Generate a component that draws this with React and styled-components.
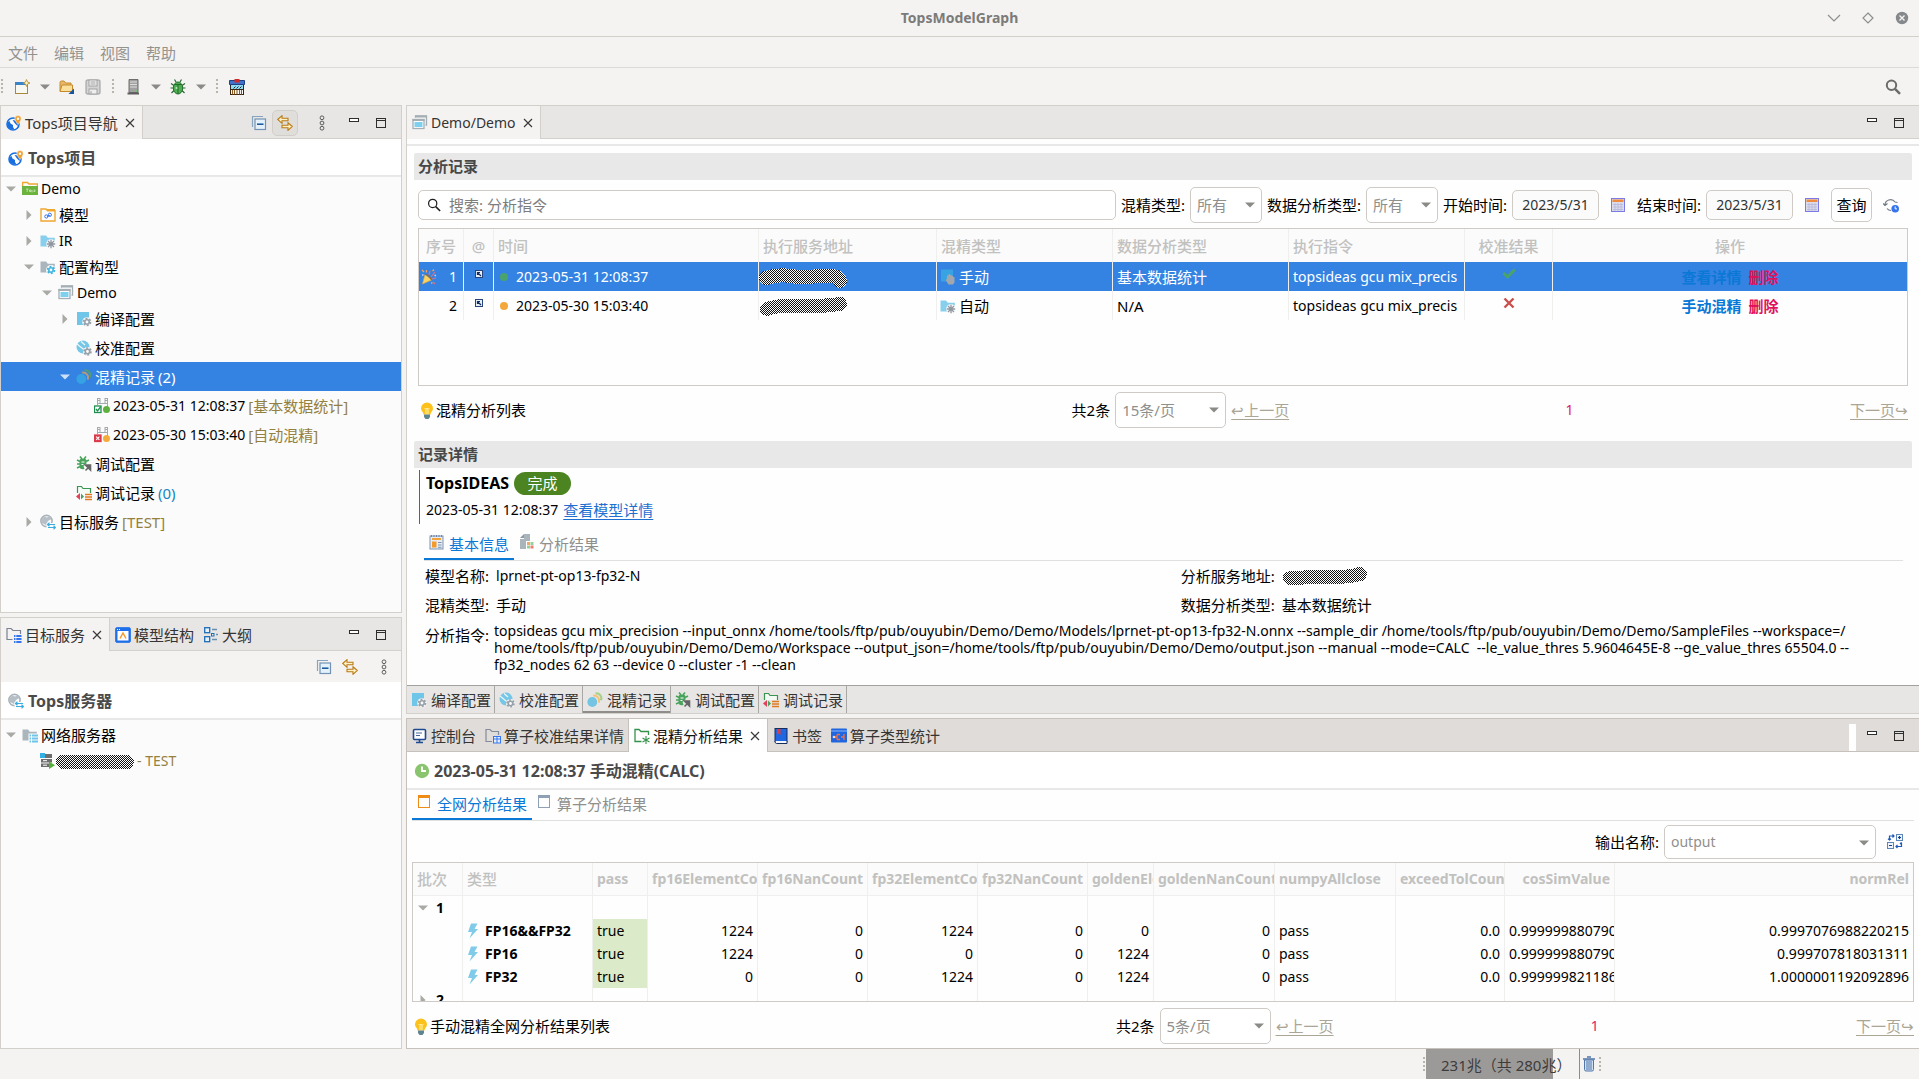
import React, { useState } from "react";
import styled, { createGlobalStyle, css } from "styled-components";

const Svg = ({ w = 16, h = 16, box, children, ...rest }) => (
  <svg
    width={w}
    height={h}
    viewBox={box || `0 0 ${w} ${h}`}
    fill="none"
    aria-hidden="true"
    {...rest}
  >
    {children}
  </svg>
);

const Gear = ({ x = 11, y = 11, color = "#9aa7b0", hole = "#fbfbfb" }) => (
  <g>
    <circle cx={x} cy={y} r="3.4" stroke={color} strokeWidth="1.8" strokeDasharray="1.8 1.76" />
    <circle cx={x} cy={y} r="2.2" fill={hole} stroke={color} strokeWidth="1.6" />
  </g>
);

const FolderShape = ({ color = "#9aa7b0" }) => (
  <path d="M0.5 2.5h5.5l1.8 2.2h7v8.8h-14.3z" fill={color} />
);

const GlobePinIcon = () => (
  <Svg>
    <circle cx="7" cy="9" r="6" fill="#fff" stroke="#1a6fe0" strokeWidth="1.6" />
    <path d="M1.5 7.5L3.5 6l1 2.5 2.5 1.5v2l1.5 2.500Q3 15 1.500 10.500z" fill="#1a6fe0" />
    <path d="M6.500 5L9 8.500l2.500 2.500 1-2.500-3-3z" fill="#1a6fe0" />
    <path d="M12 0.500a3.200 3.200 0 0 1 3.200 3.200c0 2-3.200 5.800-3.200 5.800S8.800 5.700 8.800 3.700A3.200 3.200 0 0 1 12 0.500z" fill="#f0a030" stroke="#fff" strokeWidth="0.5" />
    <circle cx="12" cy="3.700" r="1.200" fill="#fff" />
  </Svg>
);

const ProjectIcon = () => (
  <Svg>
    <path d="M0.500 5V1.500h5l1.500 1.500h8.500V5" stroke="#f0a732" strokeWidth="1.500" />
    <rect y="5" width="16" height="9" fill="#6cb33e" />
    <path d="M4 8h2.500M5.200 8v3M7.500 9h1.500v1.500H7.500zM10 9v2.500M11.500 9h1.500v1.500h-1.500" stroke="#d8efc6" strokeWidth="0.700" />
  </Svg>
);

const ModelFolderIcon = () => (
  <Svg>
    <path d="M1 2h5l1.500 1.800H15V14H1z" fill="#fff" stroke="#f0a732" strokeWidth="1.400" />
    <path d="M6 2h9v1.800H7.500z" fill="#f0a732" />
    <circle cx="6.300" cy="9.500" r="1.600" stroke="#3574f0" />
    <circle cx="9.800" cy="7.800" r="1.600" stroke="#3574f0" />
    <path d="M7 9.500l3-1" stroke="#3574f0" />
  </Svg>
);

const IrFolderIcon = () => (
  <Svg>
    <FolderShape color="#87cfec" />
    <circle cx="11" cy="11" r="4.800" fill="#fbfbfb" />
    <path d="M11 6.800v8.400M6.800 11h8.400M8 8l6 6M14 8l-6 6" stroke="#9097a0" strokeWidth="1.300" />
  </Svg>
);

const ConfigFolderIcon = () => (
  <Svg>
    <FolderShape color="#aab5bc" />
    <circle cx="11" cy="11" r="5" fill="#fbfbfb" />
    <Gear color="#40b6e0" />
  </Svg>
);

const WindowsIcon = () => (
  <Svg>
    <path d="M3.500 2.500V1h11v9h-1" stroke="#a4aeb5" strokeWidth="1.300" />
    <path d="M3 0.500h12v2H3z" fill="#a4aeb5" />
    <rect x="1" y="4.500" width="11" height="9" fill="#fff" stroke="#a4aeb5" strokeWidth="1.300" />
    <path d="M0.500 4h12v2h-12z" fill="#a4aeb5" />
    <rect x="2.500" y="7" width="8" height="5" fill="#7fd0ee" />
  </Svg>
);

const CompileIcon = () => (
  <Svg>
    <path d="M1 1h12v13H1z" fill="#6fc6e8" />
    <circle cx="11" cy="11" r="4.800" fill="#f4f4f4" />
    <Gear color="#97a1aa" />
  </Svg>
);

const CalibrateIcon = () => (
  <Svg>
    <circle cx="7" cy="7" r="6.500" fill="#74c7e6" />
    <path d="M1 4l11 9M5 1.500l4 3.500" stroke="#f4f4f4" strokeWidth="1.200" />
    <circle cx="11.500" cy="11.500" r="4.500" fill="#f4f4f4" />
    <Gear x={11.5} y={11.5} color="#97a1aa" />
  </Svg>
);

const MixIcon = ({ onBlue }) => (
  <Svg>
    <path d="M8.500 1.500a4.800 4.800 0 0 1 5.300 6.800" stroke={onBlue ? "#4f9b7c" : "#a8d28b"} strokeWidth="2.200" />
    <path d="M6 3.600a5 5 0 0 1 5.600 7" stroke={onBlue ? "#b09a7c" : "#f6c276"} strokeWidth="1.900" />
    <circle cx="5.300" cy="10" r="4.900" fill={onBlue ? "#35a2e4" : "#74c4e4"} />
  </Svg>
);

const RecordIcon = ({ ok }) => (
  <Svg>
    <path d="M3.500 0v7M13.500 0v9M3.500 5.500h10M6 0v6M11 0v6M3.500 2.500H6M11 2.500h2.500M3.500 0.500H6M11 0.500h2.500" stroke="#a4a9ad" />
    <rect x="0.500" y="8" width="6.500" height="6.500" fill={ok ? "#fff" : "#db3b4b"} stroke={ok ? "#1e8e4e" : "#db3b4b"} strokeWidth="1.300" />
    {ok ? (
      <path d="M2 11l1.500 2 3-4" stroke="#1e8e4e" strokeWidth="1.300" />
    ) : (
      <path d="M2.200 9.700l3.200 3.200M5.400 9.700l-3.200 3.200" stroke="#fff" strokeWidth="1.100" />
    )}
    <circle cx="12.500" cy="11.500" r="3.500" fill={ok ? "#5fb13f" : "#f4ab3a"} />
  </Svg>
);

const DebugIcon = () => (
  <Svg>
    <path d="M4 0.500l2 2.500M10 0.500L8 3M1 4l3 1.500M1 8h3M1 12l3-1.500M13 4l-3 1.500" stroke="#4aa35c" strokeWidth="1.600" />
    <path d="M3.500 4.500Q3.500 2.500 7 2.500t3.500 2v3L7.500 10l1 3Q3.500 14 3.500 10z" fill="#4aa35c" />
    <path d="M5.500 6h3M5.500 8.500h2" stroke="#fff" />
    <path d="M9.500 14.500l4-4M14.500 14V9H9.500z" stroke="#666" strokeWidth="1.600" fill="#666" />
  </Svg>
);

const DebugRecordIcon = () => (
  <Svg>
    <path d="M1.500 8V1.500h4L7 3.500h7.500V8" fill="#f4fbf4" stroke="#3a9550" strokeWidth="1.200" />
    <path d="M0 11.500L4 8v7z" fill="#e3405a" />
    <path d="M8 11.500L5 8.500v6z" fill="#4aa35c" />
    <path d="M9 9.500h7M9 12h7M9 14.500h7" stroke="#e07a20" strokeWidth="1.300" />
  </Svg>
);

const TargetIcon = () => (
  <Svg>
    <circle cx="6.500" cy="7" r="5.600" stroke="#a9b3ba" strokeWidth="1.600" />
    <path d="M1 6l3-3.500 3 1 3-1.500 1.500 3L8 7l-2 4-4-2z" fill="#b6bfc5" />
    <path d="M6.500 9h9.500v7H6.500z" fill="#fbfbfb" />
    <path d="M7.500 10.500h7.500M9.500 8.700l-2 1.800 2 1.800M15.500 13.500H8M13.500 11.800l2 1.700-2 1.800" stroke="#3aaede" strokeWidth="1.200" />
  </Svg>
);

const NetFolderIcon = () => (
  <Svg>
    <FolderShape color="#aab5bc" />
    <path d="M6.500 6.500H16V16H6.500z" fill="#fbfbfb" />
    <path d="M7.500 8.500h1.500M10 8.500h6M7.500 11.500h1.500M10 11.500h6M7.500 14.500h1.500M10 14.500h6" stroke="#6cc6ea" strokeWidth="2" />
  </Svg>
);

const ServerRunIcon = () => (
  <Svg>
    <rect x="1" y="1" width="11" height="4" fill="#6e6e6e" />
    <rect x="0" y="0" width="5" height="5" fill="#35b0e4" />
    <rect x="1" y="6" width="11" height="3.500" fill="#6e6e6e" />
    <rect x="1" y="10.500" width="9" height="3.500" fill="#6e6e6e" />
    <path d="M3 7.700h4M3 12.200h4" stroke="#fff" />
    <path d="M9 8.500l6 3.700-6 3.800z" fill="#55b03c" />
  </Svg>
);

const FolderServerIcon = () => (
  <Svg>
    <path d="M6.500 12.500H1v-11h4l2 2h7.500V7" stroke="#7a8291" strokeWidth="1.200" />
    <path d="M8 9h7.500M8 12h7.500M8 15h7.500" stroke="#3574f0" strokeWidth="2" />
    <path d="M9 9h1.500M9 12h1.500M9 15h1.500" stroke="#fff" />
  </Svg>
);

const StructureIcon = () => (
  <Svg>
    <rect x="0.700" y="0.700" width="14.600" height="14.600" rx="1" fill="#1f6fea" stroke="#1f6fea" />
    <rect x="2.500" y="4" width="11" height="9.500" fill="#fff" />
    <path d="M5 11.500L8 6l3 5.500" stroke="#f29b2c" strokeWidth="1.500" />
    <path d="M2 2.500h1M4 2.500h1" stroke="#fff" />
  </Svg>
);

const OutlineIcon = () => (
  <Svg>
    <rect x="1.700" y="0.700" width="5" height="5" fill="#e8f2fb" stroke="#1f6db4" strokeWidth="1.300" />
    <rect x="1.700" y="9.700" width="5" height="5" fill="#e8f2fb" stroke="#1f6db4" strokeWidth="1.300" />
    <path d="M9 2.500h5M13 7.500h2M9 12.500h5" stroke="#6a8fae" strokeWidth="1.400" />
    <rect x="8.500" y="6.500" width="2.500" height="2.500" stroke="#1f6db4" />
  </Svg>
);

const CollapseIcon = () => (
  <Svg>
    <path d="M1.500 12V1.500H12" stroke="#87a5c0" strokeWidth="1.200" />
    <rect x="4" y="4" width="10.500" height="10.500" fill="#e4f1fb" stroke="#7293b4" strokeWidth="1.200" />
    <path d="M6 9.200h6.500" stroke="#11539b" strokeWidth="1.500" />
  </Svg>
);

const LinkIcon = () => (
  <Svg>
    <path d="M0.700 4.500L5 0.700v2.500h6v2.600H5v2.500z" fill="#fdf0c4" stroke="#b97a14" strokeWidth="1.100" />
    <path d="M15.300 11.500L11 7.800v2.400H5v2.600h6v2.500z" fill="#fdf0c4" stroke="#b97a14" strokeWidth="1.100" />
  </Svg>
);

const KebabIcon = () => (
  <Svg>
    <circle cx="8" cy="2.800" r="1.900" stroke="#5d5d5d" />
    <circle cx="8" cy="8" r="1.900" stroke="#5d5d5d" />
    <circle cx="8" cy="13.200" r="1.900" stroke="#5d5d5d" />
  </Svg>
);

const MinIcon = () => (
  <Svg>
    <rect x="3.500" y="3.500" width="9" height="3" fill="#fff" stroke="#2d2d2d" />
  </Svg>
);

const MaxIcon = () => (
  <Svg>
    <rect x="3.500" y="3.500" width="9" height="9" stroke="#2d2d2d" />
    <path d="M3 5.500h10" stroke="#2d2d2d" />
  </Svg>
);

const CloseIcon = () => (
  <Svg w={10} h={10}>
    <path d="M1 1l8 8M9 1L1 9" stroke="#3a3a3a" strokeWidth="1.200" />
  </Svg>
);

const CaretIcon = ({ color = "#8a8a86" }) => (
  <Svg w={10} h={6}>
    <path d="M0 0.500h10L5 5.500z" fill={color} />
  </Svg>
);

const RightIcon = () => (
  <Svg w={6} h={10}>
    <path d="M0.500 0v10L5.500 5z" fill="#a9a9a6" />
  </Svg>
);

const NewIcon = () => (
  <Svg>
    <rect x="1.500" y="3.500" width="12" height="11" fill="#f7f8ef" stroke="#a8893c" />
    <rect x="1" y="3" width="11" height="3" fill="#3d84c6" />
    <path d="M12.500 0.500l1 2.500 2.500 1-2.500 1-1 2.500-1-2.500-2.500-1 2.500-1z" fill="#fff6c2" stroke="#b5892e" strokeWidth="0.800" />
  </Svg>
);

const OpenIcon = () => (
  <Svg>
    <path d="M1 12V3.500q0-1.500 1.500-1.500H5l1.500 2H12v8z" fill="#e8b768" stroke="#c68a2c" />
    <path d="M1 12.500L3 6h10.500v6.500z" fill="#fbdf9c" stroke="#c68a2c" />
    <path d="M15 9.500V15H9.500z" fill="#16569f" />
  </Svg>
);

const SaveIcon = () => (
  <Svg>
    <rect x="1" y="1" width="14" height="14" rx="1" fill="#d4d4d4" stroke="#9a9a9a" />
    <rect x="4" y="1" width="8" height="6" fill="#f2f2f2" stroke="#a2a2a2" />
    <rect x="4" y="10" width="8" height="5" fill="#efefef" stroke="#a2a2a2" />
    <path d="M6 12v3M5.500 3h5M5.500 5h5" stroke="#a2a2a2" />
  </Svg>
);

const TowerIcon = () => (
  <Svg>
    <path d="M4 0.500h9v13H4z" fill="#a0a0a0" stroke="#6e6e6e" />
    <path d="M5 3h7M5 5.500h7M5 8h7" stroke="#dcdcdc" />
    <path d="M2.500 13.500h11.500v2H2.500z" fill="#5c5c5c" />
    <path d="M11 12h1" stroke="#4be04b" />
  </Svg>
);

const BugIcon = () => (
  <Svg>
    <path d="M4.500 0.500L6 3M11.500 0.500L10 3M1 4.500l3 2M15 4.500l-3 2M0.500 9h3M15.500 9h-3M1.500 14L4 11.500M14.500 14L12 11.500" stroke="#2b6a33" strokeWidth="1.200" />
    <ellipse cx="8" cy="9" rx="4.700" ry="6" fill="#4fae53" stroke="#226b2b" />
    <path d="M4.500 5.500h7M8 6v9" stroke="#226b2b" />
    <circle cx="6.500" cy="9" r="1" fill="#b9ecb5" />
  </Svg>
);

const StoreIcon = () => (
  <Svg>
    <rect x="1.500" y="5.500" width="13" height="5" fill="#8fdcf7" stroke="#2a2a2a" />
    <path d="M0.500 1.500h15v4h-15z" fill="#3e73c9" stroke="#1f3f86" />
    <rect x="5.500" y="0" width="5" height="3.500" fill="#d22a2a" />
    <path d="M4.500 9.500l2-2M7.500 9.500l2-2M10.500 9.500l2-2" stroke="#2a2a2a" />
    <rect x="1.500" y="10.500" width="13" height="5" fill="#fff" stroke="#3a2512" />
    <path d="M3.500 11v4.500M5.500 11v4.500M8 11v4.500M10.500 11v4.500M12.500 11v4.500" stroke="#8a5a20" strokeWidth="1.100" />
  </Svg>
);

const SearchIcon = ({ size = 16, color = "#1f1f1f", weight = 1.4 }) => (
  <Svg w={size} h={size} box="0 0 16 16">
    <circle cx="6.500" cy="6.200" r="4.700" stroke={color} strokeWidth={weight} />
    <path d="M10 9.800l5 5" stroke={color} strokeWidth={weight + 0.4} />
  </Svg>
);

const CalendarIcon = () => (
  <Svg>
    <rect x="1.500" y="1.500" width="13" height="13" fill="#dcdcec" stroke="#7b7be8" />
    <rect x="2.500" y="2.500" width="11" height="2.500" fill="#f08a3c" />
    <path d="M3 7.500h10M3 10h10M3 12.500h10M5 6v8M8 6v8M11 6v8" stroke="#b6b6d8" strokeWidth="0.800" />
  </Svg>
);

const RefreshIcon = () => (
  <Svg>
    <path d="M2 8.500a5.500 5.500 0 0 1 10-3.500M2 8.500L0 6.500M2 8.500l2.500-2M4 11.500a5 5 0 0 0 4 2M12 5l2.500 0.500" stroke="#747b88" strokeWidth="1.200" />
    <circle cx="12.200" cy="11.700" r="3.800" fill="#3574f0" />
    <path d="M12.200 9.500v2.400h1.800" stroke="#fff" />
  </Svg>
);

const BulbIcon = () => (
  <Svg w={14} h={17}>
    <path d="M7 0.500a6 6 0 0 1 6 6c0 2.500-2.500 3.500-2.500 6h-7C3.500 10 1 9 1 6.500a6 6 0 0 1 6-6z" fill="#fcc21b" />
    <path d="M4.500 6l1.500 1.500L7 6l1 1.500L9.500 6M6 7.500V12M8 7.500V12" stroke="#fff3b0" />
    <path d="M4 12.500h6v2.500l-1.500 2h-3L4 15z" fill="#5f8594" />
  </Svg>
);

const PartyIcon = () => (
  <Svg>
    <path d="M1.500 15L4 5.500 10.500 11z" fill="#f7d264" stroke="#e9a93c" strokeWidth="0.600" />
    <path d="M4 5.500Q8.500 6 10.500 11" stroke="#8c6a3a" strokeWidth="1.200" />
    <path d="M8 6l1-4M10 8l4-5M11 10l4-1M12 13l2 2" stroke="#d8708a" strokeWidth="1.200" />
    <path d="M1 1l2 2M5.500 1v2.500M13 0.500l-1.500 1.500M10 14h1.500" stroke="#f2a35e" strokeWidth="1.300" />
    <path d="M1 6h1.500M13.500 6.500H15" stroke="#c7d4ff" strokeWidth="1.300" />
  </Svg>
);

const LocateIcon = () => (
  <Svg w={8} h={8}>
    <rect x="0.500" y="0.500" width="7" height="7" fill="#e8eef8" stroke="#26457a" />
    <path d="M2.500 5V2.500H5M2.500 2.500l3.500 3.500" stroke="#152d5c" strokeWidth="1.200" />
  </Svg>
);

const HandIcon = () => (
  <Svg>
    <path d="M1 0.500h12v12H1z" fill="#38a3e3" />
    <path d="M7 9V6.500h1.500V5H10v1h1.500v0.700H13V8h1.500v5.500L13 15.500H8.500L6 11.500z" fill="#a2a7ad" />
  </Svg>
);

const InfoIcon = () => (
  <Svg>
    <rect x="1" y="2" width="13" height="13" fill="#e8edf4" stroke="#7d93b4" />
    <path d="M2.500 1v2M5 1v2M7.500 1v2M10 1v2M12.500 1v2" stroke="#6e86a8" />
    <path d="M3 5h9" stroke="#f29b2c" strokeWidth="1.800" />
    <rect x="3" y="7.500" width="4.500" height="6" fill="#f29b2c" />
    <path d="M9 8.500h3.500M9 11h3.500M9 13.300h3.500" stroke="#7d93b4" />
  </Svg>
);

const ResultIcon = () => (
  <Svg>
    <path d="M5 0h6v7H7v8H1V5h4z" fill="#aab4bb" />
    <path d="M1 4L5 0v4z" fill="#8d989f" />
    <rect x="8" y="8" width="3" height="3" fill="#f2a766" />
    <rect x="11.500" y="8" width="3" height="3" fill="#8fd39a" />
    <rect x="8" y="11.500" width="3" height="3" fill="#8fd39a" />
    <rect x="11.500" y="11.500" width="3" height="3" fill="#ee7d70" />
  </Svg>
);

const ConsoleIcon = () => (
  <Svg>
    <rect x="1.500" y="1.500" width="12" height="10" rx="1" fill="#fff" stroke="#1d4a91" strokeWidth="1.600" />
    <path d="M4 5h6M4 7.500h4" stroke="#46659a" />
    <path d="M4 14.500h7M7.500 12v2" stroke="#1d4a91" strokeWidth="1.600" />
  </Svg>
);

const FolderGridIcon = () => (
  <Svg>
    <path d="M7 13.500H1v-12h4l2 2h6.500V7" stroke="#848b9c" strokeWidth="1.200" />
    <rect x="8.500" y="8.500" width="7" height="6.500" fill="#e7effd" stroke="#3574f0" />
    <path d="M8.500 11h7M12 9v6" stroke="#3574f0" />
  </Svg>
);

const FolderMixIcon = () => (
  <Svg>
    <path d="M7.500 13.500H1v-12h4l2 2h7.500V7" stroke="#34924a" strokeWidth="1.300" />
    <path d="M12 8v8M8.500 10l7 4M15.500 10l-7 4" stroke="#34924a" strokeWidth="1.100" />
  </Svg>
);

const BookIcon = () => (
  <Svg>
    <rect x="2" y="0.500" width="12" height="13" fill="#1f66e0" stroke="#152c5c" />
    <path d="M2 13q0 2.500 1.500 2.500H14V13" fill="#f2f5fa" stroke="#152c5c" />
    <path d="M4 1h3.500v6L5.700 5.500 4 7z" fill="#e03a3a" />
  </Svg>
);

const StatIcon = () => (
  <Svg>
    <rect x="0" y="0.500" width="16" height="14" rx="1" fill="#1f66e0" />
    <path d="M0 3h16" stroke="#8db6fa" />
    <path d="M3 9h3M6 6.500v5M6 6.500h3M6 11.500h3M10 9h3M13 6v6" stroke="#f07048" strokeWidth="1.300" />
    <circle cx="3" cy="9" r="1.300" fill="#ffd1bd" />
  </Svg>
);

const ClockIcon = () => (
  <Svg>
    <circle cx="8" cy="8" r="7.200" fill="#8bc46e" />
    <path d="M8 3.500V8h4" stroke="#fff" strokeWidth="1.800" />
  </Svg>
);

const PageIcon = ({ color }) => (
  <Svg h={13}>
    <rect x="1.500" y="1" width="11" height="11.500" stroke={color} fill="#fff" />
    <path d="M1 1.500h12" stroke={color} strokeWidth="3" />
  </Svg>
);

const ExpandIcon = () => (
  <Svg>
    <rect x="9.500" y="0.500" width="6" height="6" fill="#edf4fc" stroke="#5c86b8" />
    <rect x="0.500" y="8.500" width="6" height="6" fill="#edf4fc" stroke="#5c86b8" />
    <path d="M11 3.500h3M12.500 2v3M2 11.500h3" stroke="#123f8c" strokeWidth="1.200" />
    <path d="M2.500 6V2H7M5.500 0.500L7 2 5.500 3.500M1 4.700L2.500 6 4 4.700M14.500 8.500v4H9M10.500 11L9 12.500l1.500 1.500M13 10l1.500-1.500" stroke="#1d59b8" strokeWidth="1.200" />
  </Svg>
);

const BoltIcon = () => (
  <Svg w={12} h={17}>
    <path d="M4 1.500h6.500L7.500 7H11L2.500 16.500 5 10H1z" fill="#7fcbe9" />
  </Svg>
);

const TrashIcon = () => (
  <Svg>
    <path d="M2 3h12M6 1h4" stroke="#5277a8" strokeWidth="1.600" />
    <path d="M3.500 4h9v9.500q0 1.500-1.500 1.500H5q-1.500 0-1.500-1.500z" fill="#cfe0f3" stroke="#5277a8" />
    <path d="M6 5v9M8 5v9M10 5v9" stroke="#5277a8" />
  </Svg>
);

const TickIcon = () => (
  <Svg w={14} h={12}>
    <path d="M1.500 5l4 4L13 1.500" stroke="#4aa36b" strokeWidth="3" />
  </Svg>
);

const CrossIcon = () => (
  <Svg w={12} h={12}>
    <path d="M1.500 1.500l9 9M10.500 1.500l-9 9" stroke="#c9504c" strokeWidth="2.400" />
  </Svg>
);

// Scribble that hides a host address
const Mask = ({ id, w, h = 18, d, size = 14 }) => (
  <Svg w={w} h={h} shapeRendering="crispEdges">
    <defs>
      <pattern id={id} width="2" height="2" patternUnits="userSpaceOnUse">
        <rect width="2" height="2" fill="#fff" />
        <rect width="1" height="1" fill="#111" />
        <rect x="1" y="1" width="1" height="1" fill="#111" />
      </pattern>
    </defs>
    <path d={d} stroke={`url(#${id})`} strokeWidth={size} strokeLinecap="round" strokeLinejoin="round" />
  </Svg>
);

const treeRows = [
  { level: 0, open: true, icon: <ProjectIcon />, text: "Demo", height: 24, latin: true },
  { level: 1, open: false, icon: <ModelFolderIcon />, text: "模型", height: 28 },
  { level: 1, open: false, icon: <IrFolderIcon />, text: "IR", height: 24, latin: true },
  { level: 1, open: true, icon: <ConfigFolderIcon />, text: "配置构型", height: 28 },
  { level: 2, open: true, icon: <WindowsIcon />, text: "Demo", height: 24, latin: true },
  { level: 3, open: false, icon: <CompileIcon />, text: "编译配置", height: 28 },
  { level: 3, icon: <CalibrateIcon />, text: "校准配置" },
  { level: 3, open: true, icon: <MixIcon onBlue />, text: "混精记录", count: "(2)", selected: true },
  { level: 4, icon: <RecordIcon ok />, text: "2023-05-31 12:08:37", note: "[基本数据统计]", latin: true },
  { level: 4, icon: <RecordIcon />, text: "2023-05-30 15:03:40", note: "[自动混精]", latin: true },
  { level: 3, icon: <DebugIcon />, text: "调试配置" },
  { level: 3, icon: <DebugRecordIcon />, text: "调试记录", count: "(0)" },
  { level: 1, open: false, icon: <TargetIcon />, text: "目标服务", note: "[TEST]" },
];

const records = [
  {
    id: 1,
    time: "2023-05-31 12:08:37",
    color: "#4aa36b",
    mask: "M8 10Q20 6 32 8T62 8T82 13",
    typeIcon: <HandIcon />,
    type: "手动",
    analysis: "基本数据统计",
    result: <TickIcon />,
    action: "查看详情",
    selected: true,
  },
  {
    id: 2,
    time: "2023-05-30 15:03:40",
    color: "#f2a83b",
    mask: "M9 12Q20 8 40 9T82 7",
    typeIcon: <IrFolderIcon />,
    type: "自动",
    analysis: "N/A",
    result: <CrossIcon />,
    action: "手动混精",
  },
];

const recordCols = [45, 30, 265, 178, 176, 176, 176, 88, null];

const resultCols = [
  { name: "批次", width: 50, cjk: true },
  { name: "类型", width: 130, cjk: true },
  { name: "pass", width: 55 },
  { name: "fp16ElementCount", width: 110 },
  { name: "fp16NanCount", width: 110 },
  { name: "fp32ElementCount", width: 110 },
  { name: "fp32NanCount", width: 110 },
  { name: "goldenElementCount", width: 66 },
  { name: "goldenNanCount", width: 121 },
  { name: "numpyAllclose", width: 121 },
  { name: "exceedTolCount", width: 109 },
  { name: "cosSimValue", width: 110, right: true },
  { name: "normRel", right: true },
];

const results = [
  ["FP16&&FP32", "1224", "0", "1224", "0", "0", "0", "0.99999988079071", "0.9997076988220215"],
  ["FP16", "1224", "0", "0", "0", "1224", "0", "0.99999988079071", "0.999707818031311"],
  ["FP32", "0", "0", "1224", "0", "1224", "0", "0.99999982118607", "1.0000001192092896"],
];

const command = [
  "topsideas gcu mix_precision --input_onnx /home/tools/ftp/pub/ouyubin/Demo/Demo/Models/lprnet-pt-op13-fp32-N.onnx --sample_dir /home/tools/ftp/pub/ouyubin/Demo/Demo/SampleFiles --workspace=/",
  "home/tools/ftp/pub/ouyubin/Demo/Demo/Workspace --output_json=/home/tools/ftp/pub/ouyubin/Demo/Demo/output.json --manual --mode=CALC  --le_value_thres 5.9604645E-8 --ge_value_thres 65504.0 --fp32_nodes 62 63 --device 0 --cluster -1 --clean",
];

const Dropdown = ({ id, label, options, width }) => (
  <SelectBox $width={width}>
    <select id={id} aria-label={label}>
      {options.map((o) => (
        <option key={o}>{o}</option>
      ))}
    </select>
    <SelectCaret>
      <CaretIcon />
    </SelectCaret>
  </SelectBox>
);

const WindowTools = () => (
  <ToolGroup $gap={11}>
    <IconButton aria-label="最小化">
      <MinIcon />
    </IconButton>
    <IconButton aria-label="最大化">
      <MaxIcon />
    </IconButton>
  </ToolGroup>
);

const ViewTab = ({ icon, text, active, latin, white }) => (
  <Tab role="tab" aria-selected={!!active} $active={active} $white={white}>
    {icon}
    <TabText $latin={latin}>{text}</TabText>
    {active && (
      <CloseMark>
        <CloseIcon />
      </CloseMark>
    )}
  </Tab>
);

const Pager = ({ title, size, lead }) => (
  <PagerRow>
    <PagerTitle $lead={lead}>
      <BulbIcon />
      {title}
    </PagerTitle>
    <PagerControls>
      <span>共2条</span>
      <Dropdown label="每页条数" options={[size]} width={111} />
      <PageLink href="#prev">↩上一页</PageLink>
    </PagerControls>
    <PageNumber>1</PageNumber>
    <PageLink href="#next">下一页↪</PageLink>
  </PagerRow>
);

export default function App() {
  const [query, setQuery] = useState("");
  const [startDate, setStartDate] = useState("2023/5/31");
  const [endDate, setEndDate] = useState("2023/5/31");

  return (
    <Window>
      <GlobalStyle />
      <TitleBar>
        <WindowTitle>TopsModelGraph</WindowTitle>
        <WindowButtons>
          <IconButton aria-label="收起">
            <Svg w={14} h={14}>
              <path d="M1 4l6 6 6-6" stroke="#8b8e8f" strokeWidth="1.200" />
            </Svg>
          </IconButton>
          <IconButton aria-label="还原">
            <Svg w={14} h={14}>
              <path d="M7 2l5 5-5 5-5-5z" stroke="#8b8e8f" strokeWidth="1.200" />
            </Svg>
          </IconButton>
          <IconButton aria-label="关闭">
            <Svg w={14} h={14}>
              <circle cx="7" cy="7" r="6.200" fill="#85898b" />
              <path d="M4.500 4.500l5 5M9.500 4.500l-5 5" stroke="#f5f3f2" strokeWidth="1.400" />
            </Svg>
          </IconButton>
        </WindowButtons>
      </TitleBar>
      <MenuBar>
        {["文件", "编辑", "视图", "帮助"].map((m) => (
          <MenuButton key={m}>{m}</MenuButton>
        ))}
      </MenuBar>
      <Toolbar>
        <Grip />
        <IconButton aria-label="新建"><NewIcon /></IconButton>
        <CaretButton aria-label="新建选项"><CaretIcon /></CaretButton>
        <IconButton aria-label="打开"><OpenIcon /></IconButton>
        <IconButton aria-label="保存"><SaveIcon /></IconButton>
        <Grip />
        <IconButton aria-label="服务器"><TowerIcon /></IconButton>
        <CaretButton aria-label="服务器选项"><CaretIcon /></CaretButton>
        <IconButton aria-label="调试"><BugIcon /></IconButton>
        <CaretButton aria-label="调试选项"><CaretIcon /></CaretButton>
        <Grip />
        <IconButton aria-label="模型库"><StoreIcon /></IconButton>
        <Spacer />
        <IconButton aria-label="搜索"><SearchIcon color="#6b6b6b" weight={2} /></IconButton>
      </Toolbar>

      <Workbench>
        <LeftColumn>
          <Panel>
            <TabBar>
              <ViewTab icon={<GlobePinIcon />} text="Tops项目导航" active />
              <Spacer />
              <TabTools>
                <ToolGroup $gap={5}>
                  <IconButton aria-label="全部折叠"><CollapseIcon /></IconButton>
                  <ToggleButton aria-label="链接编辑器" aria-pressed="true"><LinkIcon /></ToggleButton>
                </ToolGroup>
                <IconButton aria-label="视图菜单"><KebabIcon /></IconButton>
                <WindowTools />
              </TabTools>
            </TabBar>
            <ViewHeading>
              <GlobePinIcon />
              Tops项目
            </ViewHeading>
            <Tree role="tree">
              {treeRows.map((row, i) => (
                <TreeRow
                  key={i}
                  role="treeitem"
                  aria-selected={!!row.selected}
                  $level={row.level}
                  $height={row.height}
                  $selected={row.selected}
                >
                  <Twisty>
                    {row.open === true && <CaretIcon color={row.selected ? "#cfe1f7" : "#a9a9a6"} />}
                    {row.open === false && <RightIcon />}
                  </Twisty>
                  {row.icon}
                  <TreeText $latin={row.latin}>{row.text}</TreeText>
                  {row.count && <Count $selected={row.selected}>{row.count}</Count>}
                  {row.note && <Note>{row.note}</Note>}
                </TreeRow>
              ))}
            </Tree>
          </Panel>

          <Panel>
            <TabBar>
              <ViewTab icon={<FolderServerIcon />} text="目标服务" active />
              <ViewTab icon={<StructureIcon />} text="模型结构" />
              <ViewTab icon={<OutlineIcon />} text="大纲" />
              <Spacer />
              <TabTools>
                <WindowTools />
              </TabTools>
            </TabBar>
            <ViewToolbar>
              <ToolGroup $gap={10}>
                <IconButton aria-label="全部折叠"><CollapseIcon /></IconButton>
                <IconButton aria-label="链接编辑器"><LinkIcon /></IconButton>
              </ToolGroup>
              <IconButton aria-label="视图菜单"><KebabIcon /></IconButton>
            </ViewToolbar>
            <ViewHeading>
              <TargetIcon />
              Tops服务器
            </ViewHeading>
            <Tree role="tree">
              <TreeRow role="treeitem" $level={0}>
                <Twisty><CaretIcon color="#a9a9a6" /></Twisty>
                <NetFolderIcon />
                <TreeText>网络服务器</TreeText>
              </TreeRow>
              <TreeRow role="treeitem" $level={1} $height={24}>
                <Twisty />
                <ServerRunIcon />
                <Mask id="mask-host" w={78} h={16} d="M7 9H71" />
                <Note $latin>- TEST</Note>
              </TreeRow>
            </Tree>
          </Panel>
        </LeftColumn>

        <RightColumn>
          <Panel $open>
            <TabBar>
              <ViewTab icon={<WindowsIcon />} text="Demo/Demo" active latin />
              <Spacer />
              <TabTools>
                <WindowTools />
              </TabTools>
            </TabBar>
            <EditorBody>
              <SectionHead>分析记录</SectionHead>
              <FilterRow>
                <SearchField>
                  <SearchIcon size={14} />
                  <input
                    aria-label="搜索"
                    placeholder="搜索: 分析指令"
                    value={query}
                    onChange={(e) => setQuery(e.target.value)}
                  />
                </SearchField>
                <label htmlFor="mix-type">混精类型:</label>
                <Dropdown id="mix-type" options={["所有"]} width={72} />
                <label htmlFor="analysis-type">数据分析类型:</label>
                <Dropdown id="analysis-type" options={["所有"]} width={72} />
                <label htmlFor="start-date">开始时间:</label>
                <DateInput id="start-date" value={startDate} onChange={(e) => setStartDate(e.target.value)} />
                <DateButton aria-label="选择开始时间"><CalendarIcon /></DateButton>
                <label htmlFor="end-date">结束时间:</label>
                <DateInput id="end-date" value={endDate} onChange={(e) => setEndDate(e.target.value)} />
                <DateButton aria-label="选择结束时间"><CalendarIcon /></DateButton>
                <QueryButton>查询</QueryButton>
                <DateButton aria-label="刷新"><RefreshIcon /></DateButton>
              </FilterRow>
              <TableBox $inset>
                <RecordTable>
                  <colgroup>
                    {recordCols.map((w, i) => (
                      <Col key={i} $width={w} />
                    ))}
                  </colgroup>
                  <thead>
                    <tr>
                      <Th $center>序号</Th>
                      <Th $center>@</Th>
                      <Th>时间</Th>
                      <Th>执行服务地址</Th>
                      <Th>混精类型</Th>
                      <Th>数据分析类型</Th>
                      <Th>执行指令</Th>
                      <Th $center>校准结果</Th>
                      <Th $center>操作</Th>
                    </tr>
                  </thead>
                  <tbody>
                    {records.map((r) => (
                      <RecordRow key={r.id} $selected={r.selected}>
                        <td>
                          <IndexCell>
                            {r.selected ? <PartyIcon /> : <span />}
                            {r.id}
                          </IndexCell>
                        </td>
                        <CenterCell><LocateIcon /></CenterCell>
                        <td>
                          <CellLine>
                            <Dot $color={r.color} />
                            <Latin>{r.time}</Latin>
                          </CellLine>
                        </td>
                        <MaskCell>
                          <Mask id={`mask-${r.id}`} w={90} h={20} d={r.mask} />
                        </MaskCell>
                        <td>
                          <TypeLine>
                            {r.typeIcon}
                            {r.type}
                          </TypeLine>
                        </td>
                        <td>{r.analysis}</td>
                        <td><Latin>topsideas gcu mix_precis</Latin></td>
                        <CenterCell>{r.result}</CenterCell>
                        <td>
                          <Actions>
                            <RowLink href="#open">{r.action}</RowLink>
                            <RowLink href="#delete" $danger>删除</RowLink>
                          </Actions>
                        </td>
                      </RecordRow>
                    ))}
                  </tbody>
                </RecordTable>
              </TableBox>
              <PagerFrame>
                <Pager title="混精分析列表" size="15条/页" lead={44} />
              </PagerFrame>

              <SectionHead>记录详情</SectionHead>
              <Summary>
                <SummaryLine>
                  <Product>TopsIDEAS</Product>
                  <Badge>完成</Badge>
                </SummaryLine>
                <SummaryLine>
                  <Latin>2023-05-31 12:08:37</Latin>
                  <a href="#model">查看模型详情</a>
                </SummaryLine>
              </Summary>
              <DetailTabs role="tablist">
                <SubTab role="tab" aria-selected="true" $active><InfoIcon />基本信息</SubTab>
                <SubTab role="tab" aria-selected="false"><ResultIcon />分析结果</SubTab>
              </DetailTabs>
              <DetailGrid>
                <Field><dt>模型名称:</dt><dd><Latin>lprnet-pt-op13-fp32-N</Latin></dd></Field>
                <Field>
                  <dt>分析服务地址:</dt>
                  <dd><Mask id="mask-addr" w={86} h={19} d="M8 12Q30 11 50 11T78 8" /></dd>
                </Field>
                <Field><dt>混精类型:</dt><dd>手动</dd></Field>
                <Field><dt>数据分析类型:</dt><dd>基本数据统计</dd></Field>
                <CommandField>
                  <dt>分析指令:</dt>
                  <dd>{command[0]}<wbr />{command[1]}</dd>
                </CommandField>
              </DetailGrid>
            </EditorBody>
            <PageTabs role="tablist">
              <PageTab role="tab"><CompileIcon />编译配置</PageTab>
              <PageTab role="tab"><CalibrateIcon />校准配置</PageTab>
              <PageTab role="tab" aria-selected="true" $active><MixIcon />混精记录</PageTab>
              <PageTab role="tab"><DebugIcon />调试配置</PageTab>
              <PageTab role="tab"><DebugRecordIcon />调试记录</PageTab>
            </PageTabs>
          </Panel>

          <Panel $open $focused>
            <TabBar $focused>
              <ViewTab icon={<ConsoleIcon />} text="控制台" />
              <ViewTab icon={<FolderGridIcon />} text="算子校准结果详情" />
              <ViewTab icon={<FolderMixIcon />} text="混精分析结果" active white />
              <ViewTab icon={<BookIcon />} text="书签" />
              <ViewTab icon={<StatIcon />} text="算子类型统计" />
              <Spacer />
              <Sash />
              <TabTools>
                <WindowTools />
              </TabTools>
            </TabBar>
            <ViewHeading>
              <ClockIcon />
              2023-05-31 12:08:37 手动混精(CALC)
            </ViewHeading>
            <ResultBody>
              <ResultTabs role="tablist">
                <SubTab role="tab" aria-selected="true" $active><PageIcon color="#ef8b17" />全网分析结果</SubTab>
                <SubTab role="tab" aria-selected="false"><PageIcon color="#90a0b4" />算子分析结果</SubTab>
              </ResultTabs>
              <OutputRow>
                <label htmlFor="output-name">输出名称:</label>
                <Dropdown id="output-name" options={["output"]} width={212} />
                <DateButton aria-label="展开或折叠"><ExpandIcon /></DateButton>
              </OutputRow>
              <TableBox>
                <ResultTable>
                  <colgroup>
                    {resultCols.map((c) => (
                      <Col key={c.name} $width={c.width} />
                    ))}
                  </colgroup>
                  <thead>
                    <tr>
                      {resultCols.map((c) => (
                        <Th key={c.name} $right={c.right} $latin={!c.cjk}>{c.name}</Th>
                      ))}
                    </tr>
                  </thead>
                  <tbody>
                    <tr>
                      <td><BatchCell><CaretIcon color="#a9a9a6" />1</BatchCell></td>
                      {resultCols.slice(1).map((c) => <td key={c.name} />)}
                    </tr>
                    {results.map((r) => (
                      <tr key={r[0]}>
                        <td />
                        <td><KindCell><BoltIcon />{r[0]}</KindCell></td>
                        <PassCell>true</PassCell>
                        {r.slice(1, 7).map((v, i) => (
                          <NumberCell key={i}>{v}</NumberCell>
                        ))}
                        <td>pass</td>
                        <NumberCell>0.0</NumberCell>
                        <td>{r[7]}</td>
                        <NumberCell>{r[8]}</NumberCell>
                      </tr>
                    ))}
                    <tr>
                      <td><BatchCell><TwistyRight><RightIcon /></TwistyRight>2</BatchCell></td>
                      {resultCols.slice(1).map((c) => <td key={c.name} />)}
                    </tr>
                  </tbody>
                </ResultTable>
              </TableBox>
              <Pager title="手动混精全网分析结果列表" size="5条/页" lead={47} />
            </ResultBody>
          </Panel>
        </RightColumn>
      </Workbench>

      <StatusBar>
        <Grip $small />
        <Heap>
          <span>231兆（共 280兆）</span>
        </Heap>
        <TrashButton aria-label="运行垃圾回收"><TrashIcon /></TrashButton>
        <Grip $small />
      </StatusBar>
    </Window>
  );
}

const GlobalStyle = createGlobalStyle`
  * {
    box-sizing: border-box;
  }

  body {
    margin: 0;
    background: #f5f3f2;
    color: #000;
    font-family: "Noto Sans", "Noto Sans CJK SC", sans-serif;
    font-size: 15px;
    line-height: 20px;
  }

  button, input, select {
    font: inherit;
    color: inherit;
  }

  button {
    border: 0;
    padding: 0;
    background: none;
  }

  svg {
    display: block;
    flex: none;
  }
`;

const Window = styled.div`
  display: flex;
  flex-direction: column;
  height: 100vh;
  overflow: hidden;
`;

const TitleBar = styled.header`
  display: grid;
  grid-template-columns: 1fr auto 1fr;
  align-items: center;
  height: 37px;
  border-bottom: 1px solid #d3cfcb;
`;

const WindowTitle = styled.h1`
  grid-column: 2;
  margin: 0;
  color: #7b7b79;
  font-size: 14px;
  font-weight: 700;
`;

const WindowButtons = styled.div`
  display: flex;
  justify-content: flex-end;
  gap: 20px;
  padding-right: 10px;
`;

const IconButton = styled.button`
  display: flex;
  align-items: center;
  justify-content: center;
`;

const CaretButton = styled(IconButton)`
  width: 9px;
`;

const ToggleButton = styled(IconButton)`
  width: 26px;
  height: 26px;
  border: 1px solid #d2cfca;
  border-radius: 5px;
  background: #dfdedb;
`;

const MenuBar = styled.nav`
  display: flex;
  align-items: center;
  gap: 16px;
  height: 31px;
  padding: 2px 0 0 8px;
  border-bottom: 1px solid #dcd9d6;
`;

const MenuButton = styled.button`
  color: #92928f;
`;

const Toolbar = styled.div`
  display: flex;
  align-items: center;
  gap: 10px;
  height: 37px;
  padding-right: 18px;
`;

const Grip = styled.span`
  width: 4px;
  height: ${({ $small }) => ($small ? "14px" : "16px")};
  background: repeating-linear-gradient(#b9b5ad 0 2px, transparent 2px 4px) 1px 0 / 2px 100% no-repeat;
`;

const Spacer = styled.span`
  flex: 1;
`;

const Workbench = styled.main`
  display: grid;
  grid-template-columns: 402px minmax(0, 1fr);
  gap: 4px;
  flex: 1;
  min-height: 0;
`;

const LeftColumn = styled.div`
  display: grid;
  grid-template-rows: 508fr 432fr;
  gap: 4px;
  min-height: 0;
`;

const RightColumn = styled(LeftColumn)`
  grid-template-rows: 609fr 331fr;
`;

const Panel = styled.section`
  display: flex;
  flex-direction: column;
  min-width: 0;
  min-height: 0;
  border: 1px solid ${({ $focused }) => ($focused ? "#c6c1bb" : "#d3cfcb")};
  border-right-width: ${({ $open }) => ($open ? "0" : "1px")};
  background: ${({ $open }) => ($open ? "#fefefe" : "#fbfbfb")};
  overflow: hidden;
`;

const TabBar = styled.div`
  display: flex;
  flex: none;
  height: 33px;
  background: ${({ $focused }) => ($focused ? "#e0dcd9" : "#e8e6e4")};
  box-shadow: inset 0 -1px 0 ${({ $focused }) => ($focused ? "#c6c1bb" : "#d3cfcb")};
`;

const Tab = styled.button`
  display: flex;
  align-items: center;
  gap: 3px;
  padding: 0 4px 0 5px;
  color: #343434;
  white-space: nowrap;

  ${({ $active, $white }) =>
    $active &&
    css`
      padding-right: 7px;
      border-right: 1px solid ${$white ? "#c6c1bb" : "#d3cfcb"};
      border-left: ${$white ? "1px solid #c6c1bb" : "0"};
      background: ${$white ? "#fefefe" : "#f5f3f2"};
      color: ${$white ? "#111" : "#343434"};
    `}
`;

const TabText = styled.span`
  font-size: ${({ $latin }) => ($latin ? "14px" : "15px")};
`;

const CloseMark = styled.span`
  padding-left: 4px;
`;

const TabTools = styled.div`
  display: flex;
  align-items: center;
  gap: 16px;
  padding-right: 12px;
`;

const ToolGroup = styled.div`
  display: flex;
  align-items: center;
  gap: ${({ $gap }) => $gap}px;
`;

const ViewToolbar = styled.div`
  display: flex;
  align-items: center;
  justify-content: flex-end;
  gap: 18px;
  flex: none;
  height: 31px;
  padding-right: 9px;
  background: #f5f3f2;
`;

const ViewHeading = styled.h2`
  display: flex;
  align-items: center;
  gap: 4px;
  flex: none;
  height: 38px;
  margin: 0;
  padding: 2px 7px 0;
  border-bottom: 2px solid #e8e8e8;
  background: #fff;
  color: #4a4a4a;
  font-size: 16px;
  font-weight: 700;
`;

const Tree = styled.div`
  flex: 1;
  min-height: 0;
`;

const TreeRow = styled.div`
  display: flex;
  align-items: center;
  height: ${({ $height }) => $height || 29}px;
  padding-left: ${({ $level }) => 4 + $level * 18}px;
  background: ${({ $selected }) => ($selected ? "#3483e2" : "transparent")};
  color: ${({ $selected }) => ($selected ? "#fff" : "#000")};
  white-space: pre;
`;

const Twisty = styled.span`
  display: flex;
  justify-content: center;
  width: 12px;
  margin-right: 5px;
`;

const TreeText = styled.span`
  margin-left: 3px;
  font-size: ${({ $latin }) => ($latin ? "14px" : "15px")};
`;

const Count = styled.span`
  margin-left: 3px;
  color: ${({ $selected }) => ($selected ? "#fff" : "#1187c4")};
`;

const Note = styled.span`
  margin-left: 3px;
  color: #94803f;
  font-size: ${({ $latin }) => ($latin ? "14px" : "15px")};
`;

const EditorBody = styled.div`
  display: flex;
  flex-direction: column;
  flex: 1;
  min-height: 0;
  margin-top: 5px;
  padding: 7px 7px 0;
  border-top: 2px solid #e8e8e8;
`;

const SectionHead = styled.h3`
  flex: none;
  height: 27px;
  margin: 0;
  padding-left: 4px;
  border-radius: 2px 2px 0 0;
  background: #e8e8e8;
  color: #474747;
  font-size: 15px;
  font-weight: 700;
  line-height: 27px;
`;

const FilterRow = styled.div`
  display: flex;
  align-items: center;
  gap: 5px;
  flex: none;
  height: 48px;
  padding: 1px 7px 0 4px;
  white-space: nowrap;
`;

const SearchField = styled.div`
  display: flex;
  align-items: center;
  gap: 8px;
  flex: 1;
  height: 30px;
  padding: 0 8px;
  border: 1px solid #cfcac5;
  border-radius: 5px;
  background: #fff;

  input {
    flex: 1;
    min-width: 0;
    border: 0;
    outline: 0;
    padding: 0;
    background: none;
  }

  input::placeholder {
    color: #7d7d7d;
    opacity: 1;
  }
`;

const SelectBox = styled.span`
  position: relative;
  display: flex;
  width: ${({ $width }) => $width}px;

  select {
    width: 100%;
    height: 36px;
    padding: 0 24px 0 6px;
    appearance: none;
    border: 1px solid #cfcac5;
    border-radius: 5px;
    background: #fff;
    color: #8f8f8c;
  }
`;

const SelectCaret = styled.span`
  position: absolute;
  top: 15px;
  right: 7px;
  pointer-events: none;
`;

const DateInput = styled.input`
  width: 87px;
  height: 30px;
  padding: 0 8px;
  border: 1px solid #cfcac5;
  border-radius: 5px;
  background: #fbfbfb;
  color: #2e3436;
  font-size: 14px;
  text-align: center;
`;

const DateButton = styled(IconButton)`
  width: 28px;
`;

const QueryButton = styled.button`
  width: 41px;
  height: 34px;
  border: 1px solid #cfcac5;
  border-radius: 5px;
  background: #fff;
`;

const TableBox = styled.div`
  flex: 1;
  min-height: 0;
  margin: ${({ $inset }) => ($inset ? "0 4px" : "0")};
  border: 1px solid #cfcac5;
  background: #fefefe;
  overflow: hidden;
`;

const Col = styled.col`
  width: ${({ $width }) => ($width ? `${$width}px` : "auto")};
`;

const BaseTable = styled.table`
  width: 100%;
  table-layout: fixed;
  border-collapse: separate;
  border-spacing: 0;

  td,
  th {
    padding: 0 4px;
    border-right: 1px solid #efefee;
    overflow: hidden;
    white-space: nowrap;
    text-align: left;
  }

  td:last-child,
  th:last-child {
    border-right: 0;
  }

  thead tr {
    height: 33px;
  }
`;

const RecordTable = styled(BaseTable)``;

const ResultTable = styled(BaseTable)`
  font-size: 14px;

  th {
    border-bottom: 1px solid #efefee;
  }

  tbody tr {
    height: 23px;
  }
`;

const Th = styled.th`
  && {
    background: #fbfbfb;
    color: #c1c1bf;
    font-size: ${({ $latin }) => ($latin ? "14px" : "15px")};
    font-weight: ${({ $latin }) => ($latin ? 700 : 500)};
    text-align: ${({ $center, $right }) => ($center ? "center" : $right ? "right" : "left")};
  }
`;

const RecordRow = styled.tr`
  height: 29px;
  background: ${({ $selected }) => ($selected ? "#3483e2" : "transparent")};
  color: ${({ $selected }) => ($selected ? "#fff" : "#000")};
`;

const IndexCell = styled.div`
  display: flex;
  align-items: center;
  justify-content: space-between;
  margin-left: -2px;
  padding-right: 2px;
  font-size: 14px;
`;

const CenterCell = styled.td`
  && {
    text-align: center;
  }

  > svg {
    margin: 0 auto 6px;
  }
`;

const MaskCell = styled.td`
  && {
    padding: 0;
  }

  svg {
    margin: 2px 0 0 -1px;
  }
`;

const CellLine = styled.div`
  display: flex;
  align-items: center;
  gap: 8px;
  padding-left: 2px;
`;

const TypeLine = styled.div`
  display: flex;
  align-items: center;
  gap: 3px;
  margin-left: -1px;
`;

const Dot = styled.span`
  width: 8px;
  height: 8px;
  border-radius: 50%;
  background: ${({ $color }) => $color};
`;

const Latin = styled.span`
  font-size: 14px;
`;

const Actions = styled.div`
  display: flex;
  justify-content: center;
  gap: 7px;
`;

const RowLink = styled.a`
  color: ${({ $danger }) => ($danger ? "#e0105a" : "#0a78d6")};
  font-weight: 700;
  text-decoration: none;
`;

const PagerFrame = styled.div`
  flex: none;
  padding: 0 4px;
  margin-bottom: 9px;
`;

const PagerRow = styled.div`
  display: flex;
  align-items: center;
  flex: none;
  height: 46px;
  padding-top: 2px;
  white-space: nowrap;
`;

const PagerTitle = styled.div`
  display: flex;
  align-items: center;
  gap: 2px;
  flex: 0 0 ${({ $lead }) => $lead}%;
  padding-left: 2px;
`;

const PagerControls = styled.div`
  display: flex;
  align-items: center;
  gap: 5px;
  margin-left: -2px;
`;

const PageLink = styled.a`
  color: #aaa595;
  text-underline-offset: 3px;
`;

const PageNumber = styled.span`
  flex: 1;
  color: #e0206a;
  font-size: 14px;
  text-align: center;
`;

const Summary = styled.div`
  flex: none;
  margin: 2px 0 0 5px;
`;

const SummaryLine = styled.div`
  display: flex;
  align-items: center;
  gap: 5px;
  height: 26px;
  padding-left: 6px;
  border-left: 1px solid #0a78d6;

  & + & {
    height: 28px;
  }

  a {
    color: #1d6fd0;
    text-underline-offset: 3px;
  }
`;

const Product = styled.strong`
  font-size: 16px;
`;

const Badge = styled.span`
  width: 57px;
  height: 23px;
  border-radius: 12px;
  background: #4b8420;
  color: #fff;
  line-height: 23px;
  text-align: center;
`;

const SubTabs = styled.div`
  display: flex;
  flex: none;
  height: 31px;
  border-bottom: 1px solid #e0e0df;
`;

const DetailTabs = styled(SubTabs)`
  margin: 6px 9px 0 10px;
`;

const ResultTabs = styled(SubTabs)``;

const SubTab = styled.button`
  display: flex;
  align-items: center;
  gap: 4px;
  padding: 0 5px;
  border-bottom: 2px solid ${({ $active }) => ($active ? "#0a78d6" : "transparent")};
  color: ${({ $active }) => ($active ? "#0a78d6" : "#8f8f8c")};

  svg {
    margin-bottom: 5px;
  }
`;

const DetailGrid = styled.dl`
  display: grid;
  grid-template-columns: 51fr 49fr;
  flex: none;
  margin: 0;
  padding: 0 5px 12px 11px;

  dt,
  dd {
    margin: 0;
  }
`;

const Field = styled.div`
  display: flex;
  align-items: center;
  gap: 7px;
  height: 29px;
`;

const CommandField = styled.div`
  display: flex;
  grid-column: 1 / -1;
  gap: 5px;
  padding-top: 3px;

  dt {
    flex: none;
    padding-top: 3px;
  }

  dd {
    font-size: 14px;
    line-height: 17px;
    white-space: pre-wrap;
  }
`;

const PageTabs = styled.div`
  display: flex;
  flex: none;
  height: 28px;
  border-top: 1px solid #a3a19f;
  background: #e8e6e4;
`;

const PageTab = styled.button`
  display: flex;
  align-items: center;
  gap: 4px;
  padding: 0 3px 0 4px;
  border-right: 1px solid #a9a7a4;
  color: #343434;
  box-shadow: ${({ $active }) => ($active ? "inset 0 -2px 0 #8f8d8a" : "none")};
`;

const Sash = styled.span`
  width: 7px;
  height: 27px;
  margin: 5px 8px 0 0;
  background: #fefefe;
`;

const ResultBody = styled.div`
  display: flex;
  flex-direction: column;
  flex: 1;
  min-height: 0;
  padding: 0 5px;
`;

const OutputRow = styled.div`
  display: flex;
  align-items: center;
  justify-content: flex-end;
  gap: 5px;
  flex: none;
  height: 41px;
  padding-right: 5px;

  select {
    height: 34px;
    font-size: 14px;
  }
`;

const BatchCell = styled.div`
  display: flex;
  align-items: center;
  gap: 8px;
  padding-left: 1px;
  font-weight: 700;
`;

const TwistyRight = styled.span`
  width: 10px;
  padding-left: 2px;
`;

const KindCell = styled.div`
  display: flex;
  align-items: center;
  gap: 6px;
  font-weight: 700;
`;

const PassCell = styled.td`
  background: #dbeac8;
`;

const NumberCell = styled.td`
  && {
    text-align: right;
  }
`;

const StatusBar = styled.footer`
  display: flex;
  align-items: center;
  justify-content: flex-end;
  flex: none;
  height: 30px;
  padding-right: 317px;
`;

const Heap = styled.div`
  align-self: stretch;
  width: 154px;
  padding-left: 15px;
  border-right: 1px solid #8e8c8a;
  background: linear-gradient(90deg, #9c9a98 83%, #f5f3f2 83%);
  color: #3c3c3c;
  line-height: 32px;
  white-space: nowrap;
`;

const TrashButton = styled(IconButton)`
  width: 18px;
`;
